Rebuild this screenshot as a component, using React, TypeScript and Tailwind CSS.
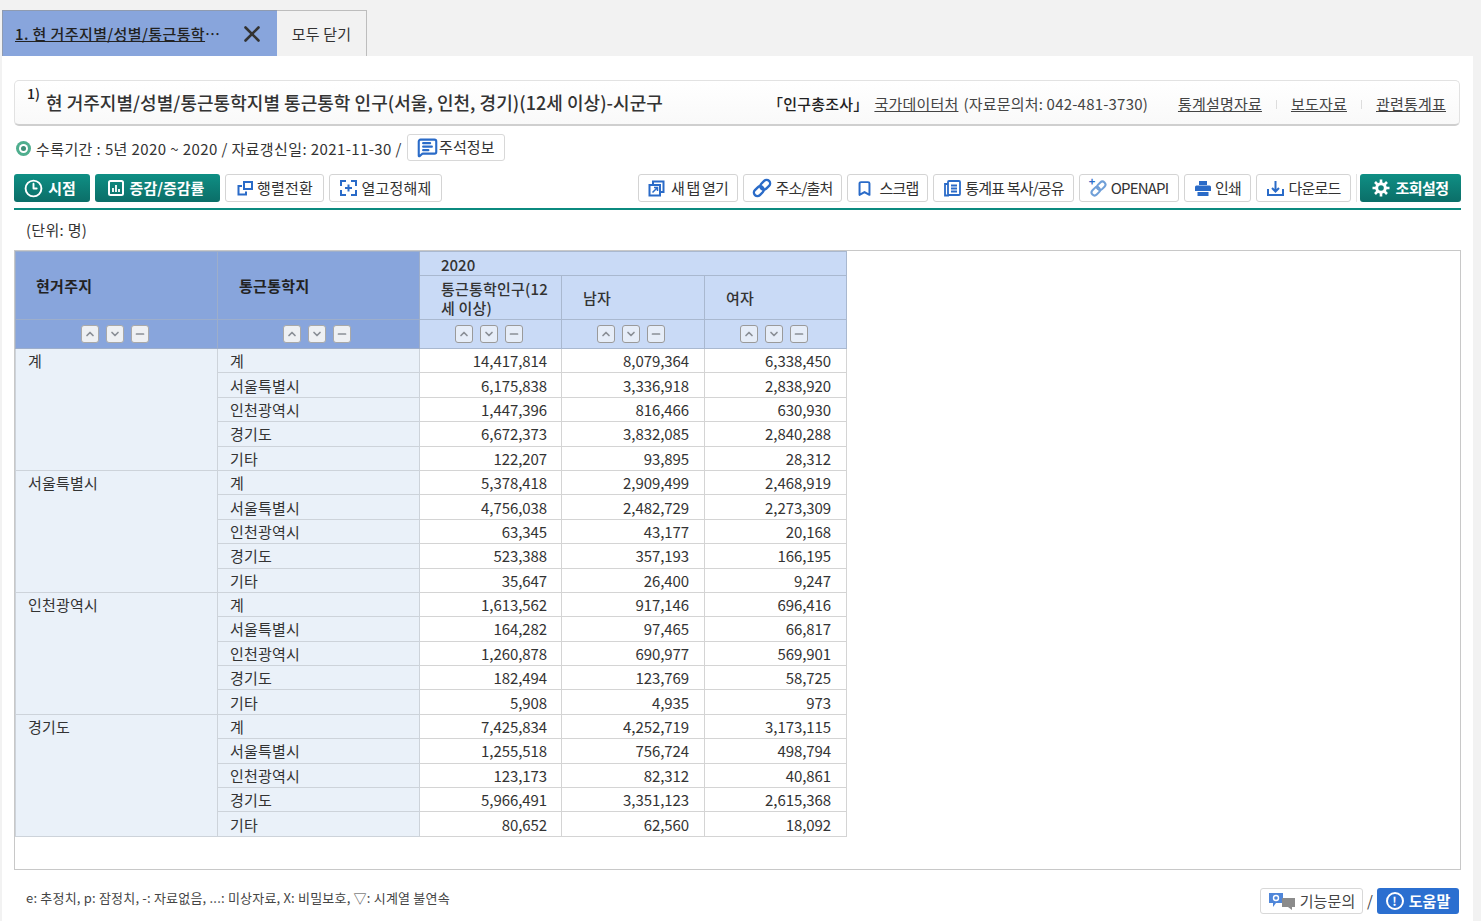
import React from 'react';
import { ChevronUp, ChevronDown, Minus, X, Bookmark, MessageSquareText, Clock3 } from 'lucide-react';

const regions = ['계', '서울특별시', '인천광역시', '경기도'];
const places = ['계', '서울특별시', '인천광역시', '경기도', '기타'];
const rows: string[][][] = [
  [
    ['14,417,814', '8,079,364', '6,338,450'],
    ['6,175,838', '3,336,918', '2,838,920'],
    ['1,447,396', '816,466', '630,930'],
    ['6,672,373', '3,832,085', '2,840,288'],
    ['122,207', '93,895', '28,312'],
  ],
  [
    ['5,378,418', '2,909,499', '2,468,919'],
    ['4,756,038', '2,482,729', '2,273,309'],
    ['63,345', '43,177', '20,168'],
    ['523,388', '357,193', '166,195'],
    ['35,647', '26,400', '9,247'],
  ],
  [
    ['1,613,562', '917,146', '696,416'],
    ['164,282', '97,465', '66,817'],
    ['1,260,878', '690,977', '569,901'],
    ['182,494', '123,769', '58,725'],
    ['5,908', '4,935', '973'],
  ],
  [
    ['7,425,834', '4,252,719', '3,173,115'],
    ['1,255,518', '756,724', '498,794'],
    ['123,173', '82,312', '40,861'],
    ['5,966,491', '3,351,123', '2,615,368'],
    ['80,652', '62,560', '18,092'],
  ],
];

const blue = '#2a6bc8';

const ToolButton = ({ width, icon, label, tight }: { width: string; icon: React.ReactNode; label: string; tight?: boolean }) => (
  <button className={`${width} h-[28px] flex items-center justify-center gap-[3px] bg-white border border-[#d4d4d4] rounded-[3px] text-[15px] text-[#333] ${tight ? 'tracking-[-0.8px]' : 'tracking-[0.2px]'}`}>
    {icon}
    <span>{label}</span>
  </button>
);

const TealButton = ({ width, icon, label, tight }: { width: string; icon: React.ReactNode; label: string; tight?: boolean }) => (
  <button className={`${width} h-[28px] flex items-center justify-center gap-[5px] rounded-[3px] bg-gradient-to-b from-[#0f8f84] to-[#0b6e68] text-white text-[15px] font-bold ${tight ? 'tracking-[-0.5px]' : 'tracking-[0px] pr-[4px]'}`}>
    {icon}
    <span>{label}</span>
  </button>
);

const SortButtons = ({ dark }: { dark?: boolean }) => (
  <div className="flex items-center justify-center gap-[7px] pr-[4px]">
    {[ChevronUp, ChevronDown, Minus].map((Icon, i) => (
      <span
        key={i}
        className={`w-[18px] h-[18px] flex items-center justify-center rounded-[3px] border ${dark ? 'bg-[#eef0f3] border-[#a9a9a9]' : 'bg-[#e6edf8] border-[#9a9a9a]'}`}
      >
        <Icon size={12} strokeWidth={3.4} className="text-[#8a8f96]" />
      </span>
    ))}
  </div>
);

const ChainIcon = ({ color, size }: { color: string; size: number }) => (
  <svg width={size} height={size} viewBox="0 0 20 20" fill="none" stroke={color} strokeWidth="2.4">
    <g transform="rotate(-45 10 10)">
      <rect x="0" y="6.500" width="11" height="7" rx="3.500" />
      <rect x="9" y="6.500" width="11" height="7" rx="3.500" />
    </g>
  </svg>
);

const App: React.FC = () => {
  return (
    <div className="w-[1481px] h-[921px] overflow-hidden bg-[#f2f2f2] text-[#222] font-['Noto_Sans_CJK_KR','Noto_Sans',sans-serif]">
      {/* tabs */}
      <div className="h-[56px] pt-[10px] pl-[2px] flex">
        <div className="w-[275px] h-[46px] bg-[#88a5dc] border-t border-l border-[#8f9bb0] flex items-center pl-[12px]">
          <span className="w-[222px] pt-[2px] text-[15px] font-medium tracking-[0.4px] text-[#222] whitespace-nowrap"><span className="underline">1. 현 거주지별/성별/통근통학</span>⋯</span>
          <X size={26} strokeWidth={2.4} className="ml-[2px] text-[#333]" />
        </div>
        <div className="w-[90px] h-[46px] pt-[2px] bg-[#f2f2f2] border-t border-r border-[#bdbdbd] flex items-center justify-center text-[15px] tracking-[0.2px] text-[#333]">모두 닫기</div>
      </div>

      <div className="ml-[2px] w-[1471px] h-[865px] bg-white pl-[12px] pr-[12px] pt-[24px]">
        {/* title */}
        <div className="h-[46px] w-[1446px] rounded-[5px] border border-[#e2e2e2] border-b-[2px] border-b-[#cfcfcf] bg-gradient-to-b from-white to-[#f9f9f9] flex items-center pl-[12px] pr-[13px]">
          <sup className="text-[14px] font-medium mr-[6px] -mt-[6px]">1)</sup>
          <h1 className="text-[18px] font-medium tracking-[0.04px] text-[#333] whitespace-nowrap">현 거주지별/성별/통근통학지별 통근통학 인구(서울, 인천, 경기)(12세 이상)-시군구</h1>
          <div className="ml-auto pt-[3px] flex items-center text-[15px] tracking-[0.2px] text-[#444] whitespace-nowrap">
            <span className="font-medium text-[#222]">「인구총조사」</span>
            <span className="ml-[6px] underline">국가데이터처 </span>
            <span className="ml-[5px]">(자료문의처: 042-481-3730)</span>
            <span className="ml-[30px] underline">통계설명자료</span>
            <span className="mx-[14px] w-px h-[9px] bg-[#ddd]" />
            <span className="underline">보도자료</span>
            <span className="mx-[14px] w-px h-[9px] bg-[#ddd]" />
            <span className="underline">관련통계표</span>
          </div>
        </div>

        {/* period */}
        <div className="mt-[7px] h-[28px] flex items-center text-[15px] tracking-[0.4px] text-[#333] whitespace-nowrap">
          <span className="w-[15px] h-[15px] ml-[2px] mt-[3px] rounded-full bg-[#4fae8e] flex items-center justify-center mr-[5px]">
            <span className="w-[9px] h-[9px] rounded-full bg-white flex items-center justify-center">
              <span className="w-[5px] h-[5px] rounded-full bg-[#3d8f76]" />
            </span>
          </span>
          <span className="pt-[5px]">수록기간 : 5년 2020 ~ 2020 / 자료갱신일: 2021-11-30 /</span>
          <button className="ml-[5px] w-[98px] h-[27px] bg-white border border-[#d8d8d8] rounded-[3px] flex items-center justify-center gap-[1px] text-[15px] tracking-[0.1px]">
            <MessageSquareText size={21} strokeWidth={2.4} className="text-[#2a6bc8]" />
            <span>주석정보</span>
          </button>
        </div>

        {/* toolbar */}
        <div className="mt-[13px] h-[36px] w-[1447px] border-b-2 border-[#0b8a7f] flex items-start text-nowrap">
          <div className="flex gap-[5px]">
            <TealButton width="w-[76px]" icon={<Clock3 size={19} strokeWidth={2.4} />} label="시점" />
            <TealButton
              width="w-[125px]"
              icon={
                <svg width="18" height="18" viewBox="0 0 18 18" fill="none">
                  <rect x="2" y="2" width="14" height="14" rx="1.5" stroke="white" strokeWidth="2" />
                  <path d="M6 13V9M9 13V6M12 13V10" stroke="white" strokeWidth="1.8" />
                </svg>
              }
              label="증감/증감률"
            />
            <ToolButton
              width="w-[99px]"
              icon={
                <svg width="18" height="18" viewBox="0 0 18 18" fill="none" stroke={blue} strokeWidth="2">
                  <rect x="8" y="3" width="8" height="7" />
                  <path d="M6 7H2.500V15.500H10V12.500" />
                </svg>
              }
              label="행렬전환"
            />
            <ToolButton
              width="w-[113px]"
              icon={
                <svg width="19" height="18" viewBox="0 0 19 18" fill="none" stroke={blue} strokeWidth="2">
                  <path d="M7 2H2V7M12 2H17V7M7 16H2V11M12 16H17V11M6 9H13M9.500 5.500V12.500" />
                </svg>
              }
              label="열고정해제"
            />
          </div>
          <div className="ml-auto flex gap-[5px]">
            <ToolButton
              tight
              width="w-[100px]"
              icon={
                <svg width="17" height="17" viewBox="0 0 17 17" fill="none" stroke={blue} strokeWidth="2" className="mr-[3px]">
                  <path d="M5 4V1.500H15.500V12H13" />
                  <rect x="1.500" y="5" width="10.500" height="10.500" />
                  <path d="M4.500 12.500L9 8M6 7.500H9.500V11" strokeWidth="1.500" />
                </svg>
              }
              label="새 탭 열기"
            />
            <ToolButton tight width="w-[99px]" icon={<ChainIcon color={blue} size={20} />} label="주소/출처" />
            <ToolButton tight width="w-[81px]" icon={<Bookmark size={17} strokeWidth={2.8} className="text-[#2a6bc8] mr-[3px]" />} label="스크랩" />
            <ToolButton
              tight
              width="w-[141px]"
              icon={
                <svg width="19" height="18" viewBox="0 0 19 18" fill="none" stroke={blue} strokeWidth="1.800">
                  <rect x="5" y="2" width="12" height="14" rx="1" />
                  <path d="M5 5H2V16.500H6M8 6.500H14M8 9.500H14M8 12.500H14" />
                </svg>
              }
              label="통계표 복사/공유"
            />
            <ToolButton
              tight
              width="w-[100px]"
              icon={
                <span className="relative mr-[1px]">
                  <ChainIcon color="#6f9fd8" size={17} />
                  <span className="absolute -top-[4px] -left-[1px] text-[11px] leading-none font-bold text-[#2a6bc8]">+</span>
                </span>
              }
              label="OPENAPI"
            />
            <ToolButton
              tight
              width="w-[67px]"
              icon={
                <svg width="18" height="17" viewBox="0 0 18 17" fill={blue}>
                  <rect x="5" y="1" width="8" height="4" />
                  <path d="M1 7a1.500 1.500 0 0 1 1.500-1.500h13A1.500 1.500 0 0 1 17 7v4H1Z" />
                  <rect x="3.500" y="12" width="11" height="4" />
                </svg>
              }
              label="인쇄"
            />
            <ToolButton
              tight
              width="w-[95px]"
              icon={
                <svg width="19" height="18" viewBox="0 0 19 18" fill="none" stroke={blue} strokeWidth="2">
                  <path d="M2 10V16H17V10M9.500 2V12.500M6 9L9.500 12.500L13 9" />
                </svg>
              }
              label="다운로드"
            />
            <span className="w-px h-[28px] bg-[#e4e4e4] -mr-[2px]" />
            <TealButton
              tight
              width="w-[101px]"
              icon={
                <svg width="18" height="18" viewBox="0 0 18 18">
                  <circle cx="9" cy="9" r="5.800" fill="white" />
                  <path d="M9 .500V17.500M.500 9H17.500M3 3L15 15M15 3L3 15" stroke="white" strokeWidth="2.600" />
                  <circle cx="9" cy="9" r="2.800" fill="#0d7f76" />
                </svg>
              }
              label="조회설정"
            />
          </div>
        </div>

        <div className="mt-[8px] ml-[12px] h-[24px] text-[15px] tracking-[0.3px] text-[#333] leading-[24px]">(단위: 명)</div>

        {/* table */}
        <div className="mt-[8px] w-[1447px] h-[620px] border border-[#c8c8c8] text-[15px]">
          <table className="table-fixed border-collapse w-[831px] text-[#333]">
            <colgroup>
              <col className="w-[202px]" />
              <col className="w-[202px]" />
              <col className="w-[142px]" />
              <col className="w-[143px]" />
              <col className="w-[142px]" />
            </colgroup>
            <thead>
              <tr className="h-[24px]">
                <th rowSpan={2} className="bg-[#88a5dc] border border-[#9daecb] text-left pl-[20px] pt-[2px] font-bold tracking-[0.3px] text-[#222]">현거주지</th>
                <th rowSpan={2} className="bg-[#88a5dc] border border-[#9daecb] text-left pl-[21px] pt-[2px] font-bold tracking-[0.3px] text-[#222]">통근통학지</th>
                <th colSpan={3} className="bg-[#c9daf6] border border-[#a9b8cf] text-left pl-[21px] pt-[2px] leading-[20px] font-medium">2020</th>
              </tr>
              <tr className="h-[44px]">
                <th className="bg-[#c9daf6] border border-[#a9b8cf] text-left pl-[21px] pr-[8px] pt-[1px] font-medium leading-[19px] tracking-[0.2px]">통근통학인구(12세 이상)</th>
                <th className="bg-[#c9daf6] border border-[#a9b8cf] text-left pl-[21px] pt-[2px] font-medium tracking-[0.2px]">남자</th>
                <th className="bg-[#c9daf6] border border-[#a9b8cf] text-left pl-[21px] pt-[2px] font-medium tracking-[0.2px]">여자</th>
              </tr>
              <tr className="h-[29px]">
                <td className="bg-[#88a5dc] border border-[#9daecb]"><SortButtons dark /></td>
                <td className="bg-[#88a5dc] border border-[#9daecb]"><SortButtons dark /></td>
                <td className="bg-[#c9daf6] border border-[#a9b8cf]"><SortButtons /></td>
                <td className="bg-[#c9daf6] border border-[#a9b8cf]"><SortButtons /></td>
                <td className="bg-[#c9daf6] border border-[#a9b8cf]"><SortButtons /></td>
              </tr>
            </thead>
            <tbody>
              {regions.map((region, r) =>
                places.map((place, p) => (
                  <tr key={`${r}-${p}`} className="h-[24.4px]">
                    {p === 0 && (
                      <td rowSpan={5} className="align-top bg-[#eaf1f9] border border-[#cdd3da] pl-[12px] pt-[1px] leading-[22px] tracking-[0.2px]">{region}</td>
                    )}
                    <td className="bg-[#eaf1f9] border border-[#cdd3da] pl-[12px] pt-[1px] leading-[22px] tracking-[0.2px]">{place}</td>
                    {rows[r][p].map((n, c) => (
                      <td key={c} className={`bg-white border border-[#d4d4d4] pt-[1px] text-right leading-[22px] tracking-[-0.08px] ${c === 0 ? 'pr-[14px]' : 'pr-[15px]'}`}>{n}</td>
                    ))}
                  </tr>
                )),
              )}
            </tbody>
          </table>
        </div>

        {/* footer */}
        <div className="mt-[18px] w-[1445px] h-[26px] flex items-center">
          <span className="ml-[12px] mb-[6px] text-[13px] tracking-[0.2px] text-[#444]">e: 추정치, p: 잠정치, -: 자료없음, ...: 미상자료, X: 비밀보호, ▽: 시계열 불연속</span>
          <div className="ml-auto flex items-center text-[15px] tracking-[0.1px]">
            <button className="w-[103px] h-[26px] bg-white border border-[#d8d8d8] rounded-[3px] flex items-center justify-center gap-[4px] text-[#444]">
              <svg width="28" height="18" viewBox="0 0 28 18">
                <path d="M1 1H15V11H8L5 15V11H1Z" fill="#4f86d9" />
                <path d="M14 6H27V15H24V18L20 15H14Z" fill="#8b8b8b" />
                <circle cx="8" cy="6" r="2.500" fill="none" stroke="white" strokeWidth="1.400" />
              </svg>
              <span>기능문의</span>
            </button>
            <span className="mx-[4px] text-[#444]">/</span>
            <button className="w-[82px] h-[26px] bg-[#2b6fd0] rounded-[3px] flex items-center justify-center gap-[5px] text-white font-bold">
              <span className="w-[18px] h-[18px] rounded-full border-2 border-white flex items-center justify-center text-[12px] leading-none">!</span>
              <span>도움말</span>
            </button>
          </div>
        </div>
      </div>
    </div>
  );
};

export default App;
